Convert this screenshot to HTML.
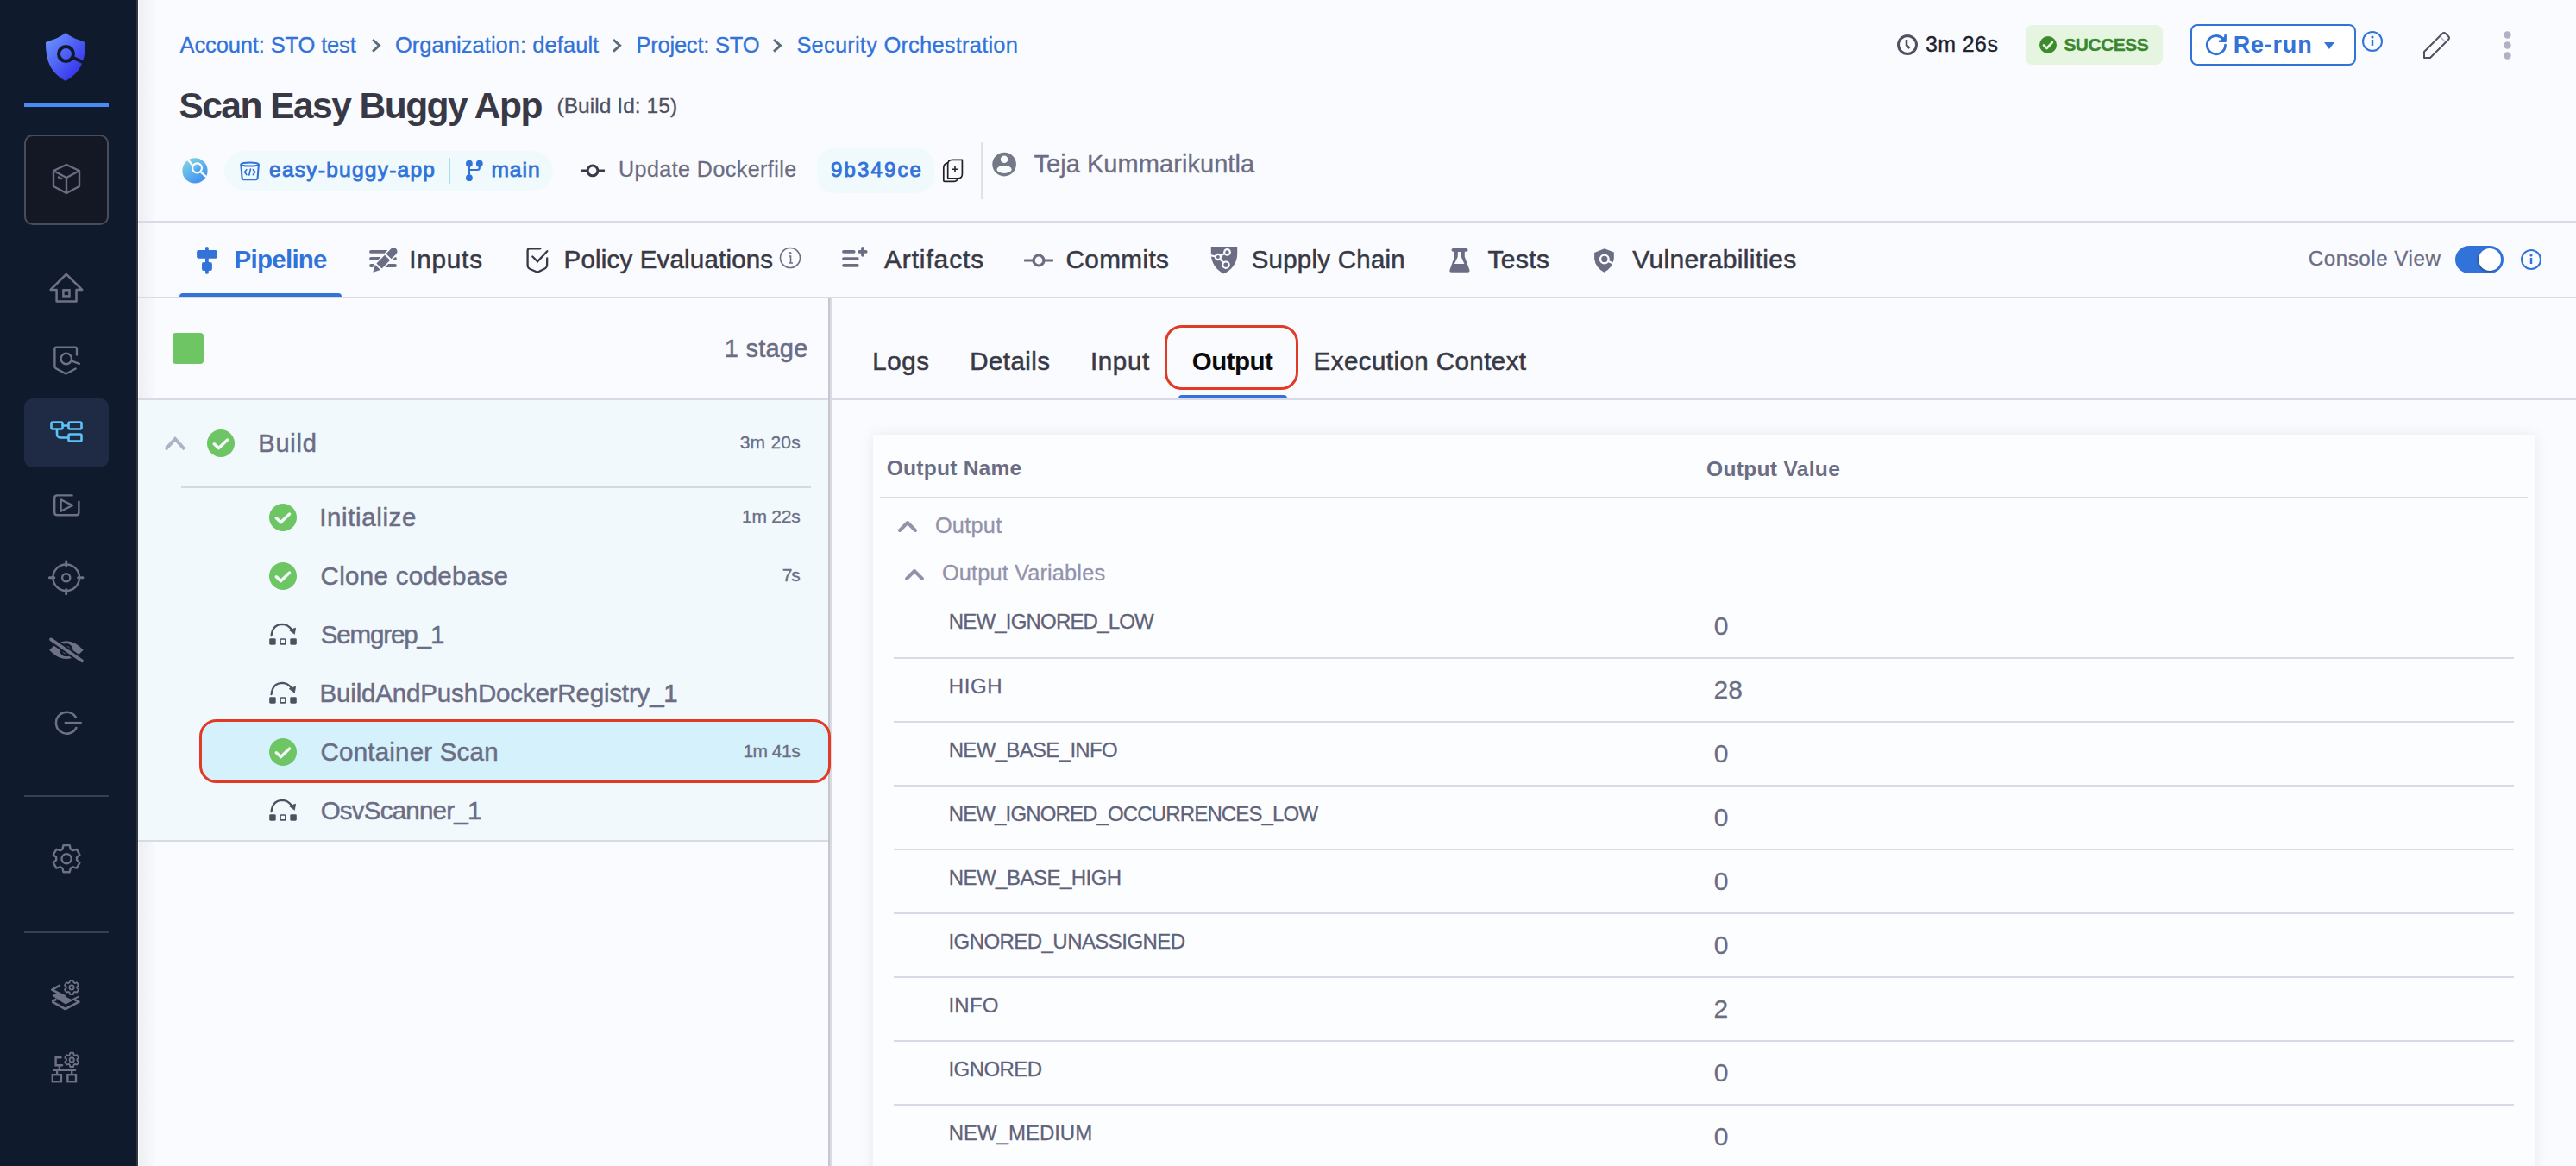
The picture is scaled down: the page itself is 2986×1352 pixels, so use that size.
<!DOCTYPE html><html><head><meta charset="utf-8"><style>
html,body{margin:0;padding:0;}
body{width:2986px;height:1352px;overflow:hidden;position:relative;background:#FAFBFE;font-family:"Liberation Sans",sans-serif;}
.t{position:absolute;white-space:nowrap;line-height:1;}
svg{display:block;}
</style></head><body>
<div style="position:absolute;left:0px;top:0px;width:158px;height:1352px;background:#0F1A2D;"></div>
<div style="position:absolute;left:158px;top:0px;width:2px;height:1352px;background:#33353F;"></div>
<div style="position:absolute;left:160px;top:0px;width:1px;height:1352px;background:#FFFFFF;"></div>
<div style="position:absolute;left:161px;top:0px;width:21px;height:1352px;background:linear-gradient(to right,#EEEFF3,rgba(250,251,254,0));"></div>
<svg style="position:absolute;left:50px;top:36px;" width="52" height="60" viewBox="0 52 60" fill="none"><defs><linearGradient id="lg" x1="0" y1="0" x2="1" y2="1"><stop offset="0" stop-color="#6F9BFF"/><stop offset="1" stop-color="#2A1FE8"/></linearGradient></defs>
<path d="M26 2 C19 8 11 10 3 13 C3 36 9 48 26 58 C43 48 49 36 49 13 C41 10 33 8 26 2 Z" fill="url(#lg)"/>
<circle cx="26.5" cy="26.5" r="8.5" stroke="#0F1A2D" stroke-width="4"/>
<path d="M33 30 L48 37" stroke="#0F1A2D" stroke-width="4"/></svg>
<div style="position:absolute;left:28px;top:120px;width:98px;height:4px;background:#4A8AF4;"></div>
<div style="position:absolute;left:28px;top:156px;width:98px;height:105px;background:#141824;border:2px solid #4A4C58;border-radius:10px;box-sizing:border-box;"></div>
<svg style="position:absolute;left:59px;top:189px;" width="36" height="38" viewBox="0 36 38" fill="none"><path d="M18 2 L33 9 L33 27 L18 35 L3 27 L3 9 Z M3 9 L18 17 L33 9 M18 17 L18 35 M8 16 L13 18.5" stroke="#6B6D85" stroke-width="2.4" stroke-linejoin="round"/></svg>
<svg style="position:absolute;left:50px;top:310px;" width="54" height="130" viewBox="0 54 130" fill="none"><path d="M8.6 26 L26.8 7.9 L45.2 26 L38.5 26 L38.5 39.6 L15.6 39.6 L15.6 26 Z" stroke="#6F7185" stroke-width="2.5" stroke-linejoin="round"/><rect x="23.4" y="26.3" width="7.1" height="7.1" stroke="#6F7185" stroke-width="2.5"/></svg>
<svg style="position:absolute;left:50px;top:310px;" width="54" height="130" viewBox="0 54 130" fill="none"><path d="M39 101.6 L39 94.6 Q39 92.6 37 92.6 L15.4 92.6 Q13.4 92.6 13.4 94.6 L13.4 115 Q13.4 116.6 15 117.4 L26.5 123.5 L37.7 117.5" stroke="#6F7185" stroke-width="2.4" stroke-linejoin="round" stroke-linecap="round"/><circle cx="26.8" cy="106" r="6.2" stroke="#6F7185" stroke-width="2.4"/><path d="M32.6 108.4 L41.9 111.8" stroke="#6F7185" stroke-width="2.4" stroke-linecap="round"/></svg>
<div style="position:absolute;left:28px;top:462px;width:98px;height:80px;background:#1F2B45;border-radius:10px;"></div>
<svg style="position:absolute;left:57px;top:487px;" width="40" height="28" viewBox="0 40 28" fill="none"><rect x="2.5" y="2.5" width="13" height="8" rx="1.5" stroke="#5CC3F5" stroke-width="2.6"/><rect x="22.5" y="2.5" width="15" height="8" rx="1.5" stroke="#5CC3F5" stroke-width="2.6"/><rect x="22.5" y="16.5" width="15" height="8" rx="1.5" stroke="#5CC3F5" stroke-width="2.6"/><path d="M15.5 6.5 L22.5 6.5 M9 10.5 L9 16 Q9 20.5 14 20.5 L22.5 20.5" stroke="#5CC3F5" stroke-width="2.6"/></svg>
<svg style="position:absolute;left:50px;top:560px;" width="54" height="140" viewBox="0 54 140" fill="none"><path d="M33.6 14.4 L16.2 14.4 Q13.2 14.4 13.2 17.4 L13.2 34.2 Q13.2 37.2 16.2 37.2 L38.4 37.2 Q41.4 37.2 41.4 34.2 L41.4 21.6" stroke="#6F7185" stroke-width="2.4" stroke-linecap="round"/><path d="M20.6 19.4 L34 26 L20.6 32.8 Z" stroke="#6F7185" stroke-width="2.4" stroke-linejoin="round"/></svg>
<svg style="position:absolute;left:50px;top:560px;" width="54" height="140" viewBox="0 54 140" fill="none"><circle cx="26.7" cy="109.8" r="15.3" stroke="#6F7185" stroke-width="2.4"/><circle cx="26.7" cy="109.8" r="4.6" stroke="#6F7185" stroke-width="2.4"/><path d="M26.7 90.8 L26.7 96.2 M26.7 123.4 L26.7 128.8 M7.4 109.8 L12.8 109.8 M40.6 109.8 L46 109.8" stroke="#6F7185" stroke-width="3" stroke-linecap="round"/></svg>
<svg style="position:absolute;left:50px;top:730px;" width="54" height="46" viewBox="0 54 46" fill="none"><path d="M7.1 23.7 Q26.8 3 46.7 23.7 Q26.8 44.5 7.1 23.7 Z" fill="#6F7185"/><circle cx="26.8" cy="23.7" r="6.2" stroke="#0F1A2D" stroke-width="2.8"/><path d="M9.1 11.4 L45 36.3" stroke="#0F1A2D" stroke-width="8"/><path d="M9.1 11.4 L45 36.3" stroke="#6F7185" stroke-width="3.8" stroke-linecap="round"/></svg>
<svg style="position:absolute;left:50px;top:815px;" width="54" height="45" viewBox="0 54 45" fill="none"><path d="M38.4 17.6 A12.4 12.4 0 1 0 38.8 28" stroke="#6F7185" stroke-width="2.5" fill="none"/><path d="M24.7 23.1 L44.8 23.1" stroke="#6F7185" stroke-width="2.4"/></svg>
<div style="position:absolute;left:28px;top:922px;width:98px;height:2px;background:#3A3E4E;"></div>
<svg style="position:absolute;left:50px;top:970px;" width="54" height="55" viewBox="0 54 55" fill="none"><path d="M22.41 14.65 L23.50 10.11 L30.70 10.11 L31.79 14.65 L34.32 16.12 L38.80 14.79 L42.40 21.02 L39.01 24.24 L39.01 27.16 L42.40 30.38 L38.80 36.61 L34.32 35.28 L31.79 36.75 L30.70 41.29 L23.50 41.29 L22.41 36.75 L19.88 35.28 L15.40 36.61 L11.80 30.38 L15.19 27.16 L15.19 24.24 L11.80 21.02 L15.40 14.79 L19.88 16.12 Z" stroke="#6F7185" stroke-width="2.4" stroke-linejoin="round"/><circle cx="27.1" cy="25.7" r="5.6" stroke="#6F7185" stroke-width="2.4"/></svg>
<div style="position:absolute;left:28px;top:1080px;width:98px;height:2px;background:#3A3E4E;"></div>
<svg style="position:absolute;left:50px;top:1130px;" width="50" height="50" viewBox="0 50 50" fill="none"><path d="M19.7 12.4 L10.3 17.6 L25.8 25.5" stroke="#6F7185" stroke-width="2.6" stroke-linejoin="round"/><path d="M10.3 24.4 L16 21 L32.5 28.8 L41.2 24.5 L41.8 26.2 L26 34.5 Z" fill="#6F7185"/><path d="M10.3 31.4 L25.7 40 L41.5 31.6 L36.5 29" stroke="#6F7185" stroke-width="2.6" stroke-linejoin="round"/><path d="M10.3 31.4 L15.5 28.5" stroke="#6F7185" stroke-width="2.6"/><path d="M30.48 9.34 L31.13 6.91 L34.87 6.91 L35.52 9.34 L36.64 9.98 L39.07 9.34 L40.94 12.57 L39.17 14.35 L39.17 15.65 L40.94 17.43 L39.07 20.66 L36.64 20.02 L35.52 20.66 L34.87 23.09 L31.13 23.09 L30.48 20.66 L29.36 20.02 L26.93 20.66 L25.06 17.43 L26.83 15.65 L26.83 14.35 L25.06 12.57 L26.93 9.34 L29.36 9.98 Z" stroke="#6F7185" stroke-width="1.9" stroke-linejoin="round"/><circle cx="33" cy="15" r="2.6" stroke="#6F7185" stroke-width="1.9"/></svg>
<svg style="position:absolute;left:50px;top:1212px;" width="50" height="50" viewBox="0 50 50" fill="none"><rect x="10.8" y="34.2" width="10.1" height="8" stroke="#6F7185" stroke-width="2.4"/><rect x="28.4" y="34.2" width="9.6" height="8" stroke="#6F7185" stroke-width="2.4"/><path d="M12 28.7 L37.1 28.7 M16.1 28.7 L16.1 33 M33.2 28.7 L33.2 33 M18.9 28.7 L18.9 23.2 M22.1 23.2 L14.6 23.2 L14.6 14.2 L20.6 14.2" stroke="#6F7185" stroke-width="2.4" stroke-linecap="round"/><path d="M30.68 11.24 L31.33 8.81 L35.07 8.81 L35.72 11.24 L36.84 11.88 L39.27 11.24 L41.14 14.47 L39.37 16.25 L39.37 17.55 L41.14 19.33 L39.27 22.56 L36.84 21.92 L35.72 22.56 L35.07 24.99 L31.33 24.99 L30.68 22.56 L29.56 21.92 L27.13 22.56 L25.26 19.33 L27.03 17.55 L27.03 16.25 L25.26 14.47 L27.13 11.24 L29.56 11.88 Z" stroke="#6F7185" stroke-width="1.9" stroke-linejoin="round"/><circle cx="33.2" cy="16.9" r="2.6" stroke="#6F7185" stroke-width="1.9"/></svg>
<div class="t" style="left:208.6px;top:39.5px;font-size:25.5px;font-weight:400;color:#3273D9;letter-spacing:-0.14px;-webkit-text-stroke:0.3px #3273D9;">Account: STO test</div>
<div class="t" style="left:457.9px;top:39.5px;font-size:25.5px;font-weight:400;color:#3273D9;letter-spacing:0.05px;-webkit-text-stroke:0.3px #3273D9;">Organization: default</div>
<div class="t" style="left:737.4px;top:39.5px;font-size:25.5px;font-weight:400;color:#3273D9;letter-spacing:-0.21px;-webkit-text-stroke:0.3px #3273D9;">Project: STO</div>
<div class="t" style="left:923.4px;top:39.5px;font-size:25.5px;font-weight:400;color:#3273D9;letter-spacing:0.20px;-webkit-text-stroke:0.3px #3273D9;">Security Orchestration</div>
<svg style="position:absolute;left:430px;top:43.5px;" width="12" height="17" viewBox="0 12 17" fill="none"><path d="M2 2 L9.6 8.8 L2 15.6" stroke="#5B6B7A" stroke-width="2.9"/></svg>
<svg style="position:absolute;left:709px;top:43.5px;" width="12" height="17" viewBox="0 12 17" fill="none"><path d="M2 2 L9.6 8.8 L2 15.6" stroke="#5B6B7A" stroke-width="2.9"/></svg>
<svg style="position:absolute;left:895px;top:43.5px;" width="12" height="17" viewBox="0 12 17" fill="none"><path d="M2 2 L9.6 8.8 L2 15.6" stroke="#5B6B7A" stroke-width="2.9"/></svg>
<div class="t" style="left:207.4px;top:102.4px;font-size:42.5px;font-weight:700;color:#383946;letter-spacing:-1.53px;">Scan Easy Buggy App</div>
<div class="t" style="left:645.5px;top:111.2px;font-size:24.5px;font-weight:400;color:#4F5162;letter-spacing:0.05px;-webkit-text-stroke:0.3px #4F5162;">(Build Id: 15)</div>
<svg style="position:absolute;left:205px;top:175px;" width="45" height="45" viewBox="0 45 45" fill="none"><defs><linearGradient id="cg" x1="0.2" y1="0.1" x2="0.8" y2="0.95"><stop offset="0" stop-color="#7AD0E4"/><stop offset="1" stop-color="#3E8EF2"/></linearGradient><clipPath id="cc"><circle cx="21" cy="22.9" r="14.6"/></clipPath></defs><circle cx="21" cy="22.9" r="14.6" fill="url(#cg)"/><g clip-path="url(#cc)"><path d="M11 8 L18 16.5 M27.8 24.6 L40 35" stroke="#FAFBFE" stroke-width="2.4"/></g><circle cx="23.5" cy="19.8" r="5.5" fill="url(#cg)" stroke="#FAFBFE" stroke-width="2.2"/></svg>
<div style="position:absolute;left:260px;top:175px;width:381px;height:46px;background:#F0FAFC;border-radius:23px;"></div>
<svg style="position:absolute;left:270px;top:180px;" width="40" height="35" viewBox="0 40 35" fill="none"><ellipse cx="19.6" cy="10.5" rx="10.3" ry="2.1" stroke="#3273D9" stroke-width="2"/><path d="M9.3 10.5 L10.6 26.5 Q10.8 28.2 13 28.2 L26.2 28.2 Q28.4 28.2 28.6 26.5 L29.9 10.5" stroke="#3273D9" stroke-width="2.1" stroke-linejoin="round"/><path d="M15.8 16.7 L13.5 19.6 L15.8 22.5 M23.4 16.7 L25.7 19.6 L23.4 22.5 M20.4 16.2 L18.8 23" stroke="#3273D9" stroke-width="1.7" stroke-linecap="round"/></svg>
<div class="t" style="left:312.0px;top:185.2px;font-size:24.5px;font-weight:400;color:#3273D9;letter-spacing:1.25px;-webkit-text-stroke:0.9px #3273D9;">easy-buggy-app</div>
<div style="position:absolute;left:520px;top:183px;width:2px;height:30px;background:#A9DDF3;"></div>
<svg style="position:absolute;left:530px;top:175px;" width="40" height="45" viewBox="0 40 45" fill="none"><circle cx="13.9" cy="14.7" r="3.9" fill="#3273D9"/><circle cx="25.8" cy="14.7" r="3.9" fill="#3273D9"/><circle cx="13.9" cy="31.2" r="3.9" fill="#3273D9"/><path d="M13.9 14.7 L13.9 31.2 M25.8 14.7 L25.8 19.5 Q25.8 22 23.3 22 L13.9 22" stroke="#3273D9" stroke-width="2.2"/></svg>
<div class="t" style="left:569.4px;top:185.2px;font-size:24.5px;font-weight:400;color:#3273D9;letter-spacing:1.05px;-webkit-text-stroke:0.9px #3273D9;">main</div>
<svg style="position:absolute;left:670px;top:185px;" width="36" height="26" viewBox="0 36 26" fill="none"><circle cx="17" cy="12.9" r="5.9" stroke="#383946" stroke-width="3"/><path d="M3 12.9 L11 12.9 M23 12.9 L31 12.9" stroke="#383946" stroke-width="3"/></svg>
<div class="t" style="left:717.1px;top:184.4px;font-size:25px;font-weight:400;color:#6B6D85;letter-spacing:0.46px;-webkit-text-stroke:0.3px #6B6D85;">Update Dockerfile</div>
<div style="position:absolute;left:947px;top:172px;width:136px;height:52px;background:#F0FAFC;border-radius:20px;"></div>
<div class="t" style="left:962.9px;top:185.3px;font-size:24px;font-weight:400;color:#3273D9;letter-spacing:2.15px;-webkit-text-stroke:0.9px #3273D9;">9b349ce</div>
<svg style="position:absolute;left:1085px;top:170px;" width="40" height="50" viewBox="0 40 50" fill="none"><path d="M13.7 18.9 Q8.8 20 8.8 24.5 L8.8 39.3 Q8.8 40.3 9.8 40.3 L20.6 40.3 Q24.2 40.3 25.3 36.9" stroke="#22222A" stroke-width="1.7" stroke-linejoin="round"/><path d="M18.9 15.4 L30.4 15.4 L30.4 31.7 Q30.4 36.9 25.3 36.9 L14.7 36.9 Q13.7 36.9 13.7 35.9 L13.7 20.6 Q13.7 15.4 18.9 15.4 Z" stroke="#22222A" stroke-width="1.7" stroke-linejoin="round"/><path d="M22 22.3 L22 30 M18 26.2 L25.9 26.2" stroke="#22222A" stroke-width="1.6"/></svg>
<div style="position:absolute;left:1137px;top:165px;width:2px;height:66px;background:#E0E1EA;"></div>
<svg style="position:absolute;left:1145px;top:172px;" width="40" height="40" viewBox="0 40 40" fill="none"><circle cx="19.1" cy="18.6" r="13.8" fill="#737987"/><circle cx="19.1" cy="12.8" r="4.3" fill="#FAFBFE"/><ellipse cx="19.1" cy="24.4" rx="8.6" ry="4.5" fill="#FAFBFE"/></svg>
<div class="t" style="left:1198.4px;top:175.8px;font-size:29px;font-weight:400;color:#6B6D85;letter-spacing:0.06px;-webkit-text-stroke:0.3px #6B6D85;">Teja Kummarikuntla</div>
<svg style="position:absolute;left:2198px;top:39px;" width="26" height="26" viewBox="0 26 26" fill="none"><circle cx="13" cy="13" r="10.5" stroke="#4F5162" stroke-width="3"/><path d="M12 7 L12 13.5 L15.5 17" stroke="#4F5162" stroke-width="2.6"/></svg>
<div class="t" style="left:2232.0px;top:38.8px;font-size:25px;font-weight:400;color:#22222A;letter-spacing:0.38px;-webkit-text-stroke:0.3px #22222A;">3m 26s</div>
<div style="position:absolute;left:2348px;top:29px;width:159px;height:46px;background:#E5F5E0;border-radius:8px;"></div>
<svg style="position:absolute;left:2363px;top:41px;" width="22" height="22" viewBox="0 22 22" fill="none"><circle cx="11" cy="11" r="10" fill="#3E8A2F"/><path d="M6 11.5 L9.5 15 L16 8" stroke="#E8F5E2" stroke-width="2.6" stroke-linecap="round" stroke-linejoin="round"/></svg>
<div class="t" style="left:2392.4px;top:41.2px;font-size:21px;font-weight:700;color:#3B872C;letter-spacing:-0.53px;-webkit-text-stroke:0.35px #3B872C;">SUCCESS</div>
<div style="position:absolute;left:2539px;top:28px;width:192px;height:48px;border:2.5px solid #3273D9;border-radius:8px;box-sizing:border-box;background:#fff;"></div>
<svg style="position:absolute;left:2545px;top:30px;" width="45" height="45" viewBox="0 45 45" fill="none"><path d="M34.5 22.2 A10.6 10.6 0 1 1 31.6 14.8" stroke="#3273D9" stroke-width="2.8" fill="none" stroke-linecap="round"/><path d="M28 17.8 L34.6 17.8 L34.6 11" fill="#3273D9" stroke="#3273D9" stroke-width="2.6" stroke-linejoin="round" stroke-linecap="round"/></svg>
<div class="t" style="left:2588.7px;top:38.8px;font-size:27px;font-weight:700;color:#3273D9;letter-spacing:0.79px;">Re-run</div>
<svg style="position:absolute;left:2693px;top:48px;" width="14" height="10" viewBox="0 14 10" fill="none"><path d="M1 1 L13 1 L7 9 Z" fill="#3273D9"/></svg>
<svg style="position:absolute;left:2737px;top:35px;" width="26" height="26" viewBox="0 26 26" fill="none"><circle cx="13" cy="13" r="11" stroke="#3273D9" stroke-width="2"/><circle cx="13" cy="8" r="1.6" fill="#3273D9"/><path d="M13 11 L13 18" stroke="#3273D9" stroke-width="2.4"/></svg>
<svg style="position:absolute;left:2807px;top:35px;" width="36" height="34" viewBox="0 36 34" fill="none"><path d="M3 25 L24 4 Q26 2 28 4 L31 7 Q33 9 31 11 L10 32 L3 32 Z" stroke="#4F5162" stroke-width="2" stroke-linejoin="round"/><path d="M22 8 L27 13" stroke="#B0B1C4" stroke-width="1.4"/></svg>
<svg style="position:absolute;left:2902px;top:36px;" width="9" height="9" viewBox="0 9 9" fill="none"><circle cx="4.5" cy="4.5" r="4.2" fill="#B0B1C4"/></svg>
<svg style="position:absolute;left:2902px;top:48px;" width="9" height="9" viewBox="0 9 9" fill="none"><circle cx="4.5" cy="4.5" r="4.2" fill="#B0B1C4"/></svg>
<svg style="position:absolute;left:2902px;top:60px;" width="9" height="9" viewBox="0 9 9" fill="none"><circle cx="4.5" cy="4.5" r="4.2" fill="#B0B1C4"/></svg>
<div style="position:absolute;left:160px;top:256px;width:2826px;height:2px;background:#D9DAE5;"></div>
<div style="position:absolute;left:160px;top:344px;width:2826px;height:2px;background:#D9DAE5;"></div>
<div style="position:absolute;left:208px;top:340px;width:188px;height:4px;background:#3273D9;border-radius:4px 4px 0 0;"></div>
<svg style="position:absolute;left:220px;top:280px;" width="40" height="42" viewBox="0 40 42" fill="none"><rect x="8.1" y="10.1" width="23.8" height="9.7" rx="2.2" fill="#3273D9"/><rect x="14" y="24" width="11.9" height="9.9" rx="2.2" fill="#3273D9"/><path d="M19.9 7.8 L19.9 35.9" stroke="#3273D9" stroke-width="3.8" stroke-linecap="round"/></svg>
<div class="t" style="left:271.6px;top:286.2px;font-size:29.5px;font-weight:700;color:#3273D9;letter-spacing:-0.74px;">Pipeline</div>
<svg style="position:absolute;left:420px;top:280px;" width="50" height="42" viewBox="0 50 42" fill="none"><path d="M10 11.9 L28 11.9 M10 19.9 L22 19.9 M10 28 L16 28 M26 28 L38 28 M34 19.9 L38 19.9" stroke="#6B6D85" stroke-width="3.8" stroke-linecap="round"/><g transform="translate(12.3,35.7) rotate(-45.3)"><g fill="#FAFBFE" stroke="#FAFBFE" stroke-width="3.2" stroke-linejoin="round"><path d="M0 0 L8 -4.3 L8 4.3 Z"/><rect x="10.2" y="-4.3" width="13.6" height="8.6"/><path d="M26 -4.3 L34 -4.3 A4.3 4.3 0 0 1 34 4.3 L26 4.3 Z"/></g><g fill="#6B6D85"><path d="M0 0 L8 -4.3 L8 4.3 Z"/><rect x="10.2" y="-4.3" width="13.6" height="8.6"/><path d="M26 -4.3 L34 -4.3 A4.3 4.3 0 0 1 34 4.3 L26 4.3 Z"/></g></g></svg>
<div class="t" style="left:474.3px;top:285.8px;font-size:29.7px;font-weight:400;color:#383946;letter-spacing:0.76px;-webkit-text-stroke:0.55px #383946;">Inputs</div>
<svg style="position:absolute;left:600px;top:280px;" width="40" height="42" viewBox="0 40 42" fill="none"><path d="M26.3 8.3 L13.8 8.3 Q11.6 8.3 11.6 10.5 L11.6 28.5 Q11.8 30.5 14 31.8 L23 35.8 L32 31.2 Q33.9 30.2 34.1 28 L34.2 19.5" stroke="#383946" stroke-width="2.3" stroke-linecap="round" stroke-linejoin="round"/><path d="M17.3 17.5 L23.1 23.3 L34.3 11.2" stroke="#383946" stroke-width="2.3" stroke-linecap="round"/></svg>
<div class="t" style="left:653.6px;top:285.9px;font-size:29.5px;font-weight:400;color:#383946;letter-spacing:0.18px;-webkit-text-stroke:0.55px #383946;">Policy Evaluations</div>
<svg style="position:absolute;left:903px;top:286px;" width="26" height="26" viewBox="0 26 26" fill="none"><circle cx="13" cy="13" r="11.5" stroke="#6B6D85" stroke-width="1.6"/><circle cx="13" cy="7.5" r="1.5" fill="#6B6D85"/><path d="M11 11 L13.5 11 L13.5 19 M11 19 L16 19" stroke="#6B6D85" stroke-width="1.6"/></svg>
<svg style="position:absolute;left:968px;top:280px;" width="42" height="42" viewBox="0 42 42" fill="none"><path d="M9.9 11.9 L21.8 11.9 M9.9 20 L25.9 20 M9.9 27.9 L25.9 27.9 M28.1 11.9 L35.8 11.9 M31.9 7.9 L31.9 15.9" stroke="#6B6D85" stroke-width="3.6" stroke-linecap="round"/></svg>
<div class="t" style="left:1025.0px;top:285.7px;font-size:29.8px;font-weight:400;color:#383946;letter-spacing:0.93px;-webkit-text-stroke:0.55px #383946;">Artifacts</div>
<svg style="position:absolute;left:1187px;top:292px;" width="34" height="20" viewBox="0 34 20" fill="none"><circle cx="17" cy="10" r="6" stroke="#6B6D85" stroke-width="3.2"/><path d="M1 10 L11 10 M23 10 L33 10" stroke="#6B6D85" stroke-width="3.2" stroke-linecap="round"/></svg>
<div class="t" style="left:1235.5px;top:285.8px;font-size:29.7px;font-weight:400;color:#383946;letter-spacing:0.39px;-webkit-text-stroke:0.55px #383946;">Commits</div>
<svg style="position:absolute;left:1398px;top:280px;" width="42" height="42" viewBox="0 42 42" fill="none"><path d="M5.8 6.1 L36.2 6.1 L36.2 15 Q35.5 30 20.5 37.5 Q6.5 30 5.8 15 Z" fill="#6B6D85"/><path d="M5 16.2 L13.9 18 L24.5 12.4 M13.9 18 L23 27.2" stroke="#FAFBFE" stroke-width="2.2"/><circle cx="24.5" cy="12.4" r="3.3" fill="#6B6D85" stroke="#FAFBFE" stroke-width="2.2"/><circle cx="13.9" cy="18" r="3.1" fill="#6B6D85" stroke="#FAFBFE" stroke-width="2.2"/><circle cx="23" cy="27.2" r="3.7" fill="#6B6D85" stroke="#FAFBFE" stroke-width="2.2"/></svg>
<div class="t" style="left:1450.7px;top:286.0px;font-size:29.4px;font-weight:400;color:#383946;letter-spacing:0.29px;-webkit-text-stroke:0.55px #383946;">Supply Chain</div>
<svg style="position:absolute;left:1672px;top:280px;" width="40" height="42" viewBox="0 40 42" fill="none"><path d="M14 10 L25.8 10 L25.8 17.8 L31.4 33 Q32 35.7 29.3 35.7 L10.5 35.7 Q7.8 35.7 8.5 33 L14 17.8 Z" fill="#6B6D85"/><path d="M12.3 9.9 L27.7 9.9" stroke="#6B6D85" stroke-width="3.6" stroke-linecap="round"/><path d="M17.9 11.9 L22 11.9 L22 18.2 L25.4 26 L13.9 26 L17.7 18 Z" fill="#FAFBFE"/></svg>
<div class="t" style="left:1724.4px;top:285.5px;font-size:30px;font-weight:400;color:#383946;letter-spacing:0.40px;-webkit-text-stroke:0.55px #383946;">Tests</div>
<svg style="position:absolute;left:1840px;top:280px;" width="40" height="42" viewBox="0 40 42" fill="none"><path d="M19.8 8.3 L30.8 12.4 L30.8 20 Q29.5 30.5 19.5 35.7 Q9.3 30.5 8.1 20 L8.1 13 Z" fill="#6B6D85"/><circle cx="19.8" cy="20.4" r="4.8" stroke="#FAFBFE" stroke-width="2.4"/><path d="M24.3 23 L31 26" stroke="#FAFBFE" stroke-width="2.4"/></svg>
<div class="t" style="left:1892.3px;top:285.5px;font-size:30px;font-weight:400;color:#383946;letter-spacing:0.31px;-webkit-text-stroke:0.55px #383946;">Vulnerabilities</div>
<div class="t" style="left:2675.8px;top:288.4px;font-size:24.2px;font-weight:400;color:#6B6D85;letter-spacing:0.51px;-webkit-text-stroke:0.3px #6B6D85;">Console View</div>
<div style="position:absolute;left:2846px;top:285px;width:56px;height:32px;background:#3273D9;border-radius:16px;"></div>
<div style="position:absolute;left:2873px;top:287.5px;width:26px;height:26px;border-radius:50%;background:#fff;box-shadow:-1px 1px 2px rgba(0,0,0,.35);"></div>
<svg style="position:absolute;left:2921px;top:288px;" width="26" height="26" viewBox="0 26 26" fill="none"><circle cx="13" cy="13" r="11" stroke="#3273D9" stroke-width="2"/><circle cx="13" cy="8" r="1.6" fill="#3273D9"/><path d="M13 11 L13 18" stroke="#3273D9" stroke-width="2.4"/></svg>
<div style="position:absolute;left:160px;top:464px;width:800px;height:511px;background:#F2F9FC;"></div>
<div style="position:absolute;left:160px;top:462px;width:800px;height:2px;background:#D9DAE5;"></div>
<div style="position:absolute;left:160px;top:974px;width:800px;height:2px;background:#D9DAE5;"></div>
<div style="position:absolute;left:960px;top:346px;width:2px;height:1006px;background:#C6C6CD;"></div>
<div style="position:absolute;left:962px;top:346px;width:2px;height:1006px;background:#D9DAE4;"></div>
<div style="position:absolute;left:200px;top:386px;width:36px;height:36px;background:#6DC563;border-radius:4px;"></div>
<div class="t" style="left:839.8px;top:390.0px;font-size:29px;font-weight:400;color:#6B6D85;letter-spacing:0.23px;-webkit-text-stroke:0.5px #6B6D85;">1 stage</div>
<svg style="position:absolute;left:189px;top:504px;" width="28" height="20" viewBox="0 28 20" fill="none"><path d="M3 17 L14 5 L25 17" stroke="#B0B1C4" stroke-width="4"/></svg>
<svg style="position:absolute;left:240px;top:498px;" width="32" height="32" viewBox="0 32 32" fill="none"><circle cx="16" cy="16" r="16" fill="#6DC563"/><path d="M8.3 16.8 L13.6 21.6 L23.6 12" stroke="#F4FAFC" stroke-width="3.5" stroke-linecap="round" stroke-linejoin="round"/></svg>
<div class="t" style="left:299.3px;top:499.6px;font-size:29px;font-weight:400;color:#6B6D85;letter-spacing:0.77px;-webkit-text-stroke:0.5px #6B6D85;">Build</div>
<div class="t" style="left:857.7px;top:502.1px;font-size:21px;font-weight:400;color:#6B6D85;letter-spacing:0.24px;-webkit-text-stroke:0.3px #6B6D85;">3m 20s</div>
<div style="position:absolute;left:210px;top:564px;width:730px;height:2px;background:#D3DAE0;"></div>
<div style="position:absolute;left:231px;top:834px;width:732px;height:74px;box-sizing:border-box;border:3.5px solid #E23B25;border-radius:20px;background:#D5F2FC;"></div>
<svg style="position:absolute;left:312px;top:584px;" width="32" height="32" viewBox="0 32 32" fill="none"><circle cx="16" cy="16" r="16" fill="#6DC563"/><path d="M8.3 16.8 L13.6 21.6 L23.6 12" stroke="#F4FAFC" stroke-width="3.5" stroke-linecap="round" stroke-linejoin="round"/></svg>
<div class="t" style="left:370.3px;top:585.2px;font-size:29.5px;font-weight:400;color:#6B6D85;letter-spacing:0.61px;-webkit-text-stroke:0.5px #6B6D85;">Initialize</div>
<div class="t" style="right:2058.5px;top:587.9px;font-size:21px;font-weight:400;color:#6B6D85;letter-spacing:-0.23px;-webkit-text-stroke:0.3px #6B6D85;">1m 22s</div>
<svg style="position:absolute;left:312px;top:652px;" width="32" height="32" viewBox="0 32 32" fill="none"><circle cx="16" cy="16" r="16" fill="#6DC563"/><path d="M8.3 16.8 L13.6 21.6 L23.6 12" stroke="#F4FAFC" stroke-width="3.5" stroke-linecap="round" stroke-linejoin="round"/></svg>
<div class="t" style="left:371.5px;top:653.2px;font-size:29.5px;font-weight:400;color:#6B6D85;letter-spacing:0.33px;-webkit-text-stroke:0.5px #6B6D85;">Clone codebase</div>
<div class="t" style="right:2059.3px;top:655.9px;font-size:21px;font-weight:400;color:#6B6D85;letter-spacing:-1.07px;-webkit-text-stroke:0.3px #6B6D85;">7s</div>
<svg style="position:absolute;left:305px;top:715px;" width="45" height="40" viewBox="0 45 40" fill="none"><path d="M9.6 22 Q11 9 22.6 8.9 Q28.5 9 33.5 15.5" stroke="#4F5162" stroke-width="2.3" fill="none" stroke-linecap="round"/><path d="M30.2 15.6 L37.6 13.3 L36.4 20.3 Z" fill="#4F5162" stroke="#4F5162" stroke-width="0.8" stroke-linejoin="round"/><rect x="7.2" y="25.2" width="7.5" height="7.5" rx="1.4" fill="#4F5162"/><rect x="20" y="26" width="5.9" height="5.9" rx="1" stroke="#4F5162" stroke-width="1.7"/><rect x="31.3" y="25.2" width="7.5" height="7.5" rx="1.4" fill="#4F5162"/></svg>
<div class="t" style="left:371.7px;top:721.2px;font-size:29.5px;font-weight:400;color:#6B6D85;letter-spacing:-1.11px;-webkit-text-stroke:0.5px #6B6D85;">Semgrep_1</div>
<svg style="position:absolute;left:305px;top:783px;" width="45" height="40" viewBox="0 45 40" fill="none"><path d="M9.6 22 Q11 9 22.6 8.9 Q28.5 9 33.5 15.5" stroke="#4F5162" stroke-width="2.3" fill="none" stroke-linecap="round"/><path d="M30.2 15.6 L37.6 13.3 L36.4 20.3 Z" fill="#4F5162" stroke="#4F5162" stroke-width="0.8" stroke-linejoin="round"/><rect x="7.2" y="25.2" width="7.5" height="7.5" rx="1.4" fill="#4F5162"/><rect x="20" y="26" width="5.9" height="5.9" rx="1" stroke="#4F5162" stroke-width="1.7"/><rect x="31.3" y="25.2" width="7.5" height="7.5" rx="1.4" fill="#4F5162"/></svg>
<div class="t" style="left:370.6px;top:789.2px;font-size:29.5px;font-weight:400;color:#6B6D85;letter-spacing:-0.17px;-webkit-text-stroke:0.5px #6B6D85;">BuildAndPushDockerRegistry_1</div>
<svg style="position:absolute;left:312px;top:856px;" width="32" height="32" viewBox="0 32 32" fill="none"><circle cx="16" cy="16" r="16" fill="#6DC563"/><path d="M8.3 16.8 L13.6 21.6 L23.6 12" stroke="#F4FAFC" stroke-width="3.5" stroke-linecap="round" stroke-linejoin="round"/></svg>
<div class="t" style="left:371.5px;top:857.2px;font-size:29.5px;font-weight:400;color:#6B6D85;letter-spacing:0.21px;-webkit-text-stroke:0.5px #6B6D85;">Container Scan</div>
<div class="t" style="right:2058.8px;top:859.9px;font-size:21px;font-weight:400;color:#6B6D85;letter-spacing:-0.51px;-webkit-text-stroke:0.3px #6B6D85;">1m 41s</div>
<svg style="position:absolute;left:305px;top:919px;" width="45" height="40" viewBox="0 45 40" fill="none"><path d="M9.6 22 Q11 9 22.6 8.9 Q28.5 9 33.5 15.5" stroke="#4F5162" stroke-width="2.3" fill="none" stroke-linecap="round"/><path d="M30.2 15.6 L37.6 13.3 L36.4 20.3 Z" fill="#4F5162" stroke="#4F5162" stroke-width="0.8" stroke-linejoin="round"/><rect x="7.2" y="25.2" width="7.5" height="7.5" rx="1.4" fill="#4F5162"/><rect x="20" y="26" width="5.9" height="5.9" rx="1" stroke="#4F5162" stroke-width="1.7"/><rect x="31.3" y="25.2" width="7.5" height="7.5" rx="1.4" fill="#4F5162"/></svg>
<div class="t" style="left:371.7px;top:925.2px;font-size:29.5px;font-weight:400;color:#6B6D85;letter-spacing:-0.77px;-webkit-text-stroke:0.5px #6B6D85;">OsvScanner_1</div>
<div style="position:absolute;left:964px;top:462px;width:2022px;height:2px;background:#D9DAE5;"></div>
<div class="t" style="left:1011.2px;top:404.1px;font-size:29.5px;font-weight:400;color:#383946;letter-spacing:0.59px;-webkit-text-stroke:0.55px #383946;">Logs</div>
<div class="t" style="left:1124.2px;top:404.1px;font-size:29.5px;font-weight:400;color:#383946;letter-spacing:0.45px;-webkit-text-stroke:0.55px #383946;">Details</div>
<div class="t" style="left:1263.9px;top:404.1px;font-size:29.5px;font-weight:400;color:#383946;letter-spacing:0.68px;-webkit-text-stroke:0.55px #383946;">Input</div>
<div class="t" style="left:1381.8px;top:404.1px;font-size:29.5px;font-weight:700;color:#0B0B0D;letter-spacing:-0.55px;">Output</div>
<div class="t" style="left:1522.6px;top:404.1px;font-size:29.5px;font-weight:400;color:#383946;letter-spacing:0.44px;-webkit-text-stroke:0.55px #383946;">Execution Context</div>
<div style="position:absolute;left:1350px;top:377px;width:155px;height:75px;box-sizing:border-box;border:3.5px solid #E23B25;border-radius:20px;"></div>
<div style="position:absolute;left:1366px;top:458px;width:126px;height:4px;background:#3273D9;border-radius:4px 4px 0 0;"></div>
<div style="position:absolute;left:1012px;top:504px;width:1926px;height:900px;background:#FCFDFF;box-shadow:0 1px 14px rgba(96,97,112,0.13);"></div>
<div class="t" style="left:1027.7px;top:531.1px;font-size:24.6px;font-weight:700;color:#6B6D85;letter-spacing:0.22px;">Output Name</div>
<div class="t" style="left:1978.0px;top:531.9px;font-size:24.6px;font-weight:700;color:#6B6D85;letter-spacing:0.29px;">Output Value</div>
<div style="position:absolute;left:1020px;top:576px;width:1910px;height:2px;background:#D9DAE5;"></div>
<svg style="position:absolute;left:1040px;top:602px;" width="24" height="16" viewBox="0 24 16" fill="none"><path d="M3 13 L12 4 L21 13" stroke="#9293AB" stroke-width="4" stroke-linecap="round" stroke-linejoin="round"/></svg>
<div class="t" style="left:1083.9px;top:596.5px;font-size:25.3px;font-weight:400;color:#9293AB;letter-spacing:0.27px;-webkit-text-stroke:0.3px #9293AB;">Output</div>
<svg style="position:absolute;left:1048px;top:658px;" width="24" height="16" viewBox="0 24 16" fill="none"><path d="M3 13 L12 4 L21 13" stroke="#9293AB" stroke-width="4" stroke-linecap="round" stroke-linejoin="round"/></svg>
<div class="t" style="left:1091.9px;top:651.8px;font-size:25.4px;font-weight:400;color:#9293AB;letter-spacing:0.13px;-webkit-text-stroke:0.3px #9293AB;">Output Variables</div>
<div class="t" style="left:1099.7px;top:709.4px;font-size:24px;font-weight:400;color:#5F6279;letter-spacing:-0.81px;-webkit-text-stroke:0.3px #5F6279;">NEW_IGNORED_LOW</div>
<div class="t" style="left:1986.8px;top:710.5px;font-size:30px;font-weight:400;color:#6B6D85;letter-spacing:0.00px;-webkit-text-stroke:0.3px #6B6D85;">0</div>
<div style="position:absolute;left:1036px;top:762px;width:1878px;height:2px;background:#D9DAE5;"></div>
<div class="t" style="left:1099.7px;top:783.5px;font-size:24px;font-weight:400;color:#5F6279;letter-spacing:0.61px;-webkit-text-stroke:0.3px #5F6279;">HIGH</div>
<div class="t" style="left:1986.5px;top:784.6px;font-size:30px;font-weight:400;color:#6B6D85;letter-spacing:0.00px;-webkit-text-stroke:0.3px #6B6D85;">28</div>
<div style="position:absolute;left:1036px;top:836px;width:1878px;height:2px;background:#D9DAE5;"></div>
<div class="t" style="left:1099.7px;top:857.6px;font-size:24px;font-weight:400;color:#5F6279;letter-spacing:-0.67px;-webkit-text-stroke:0.3px #5F6279;">NEW_BASE_INFO</div>
<div class="t" style="left:1986.8px;top:858.7px;font-size:30px;font-weight:400;color:#6B6D85;letter-spacing:0.00px;-webkit-text-stroke:0.3px #6B6D85;">0</div>
<div style="position:absolute;left:1036px;top:910px;width:1878px;height:2px;background:#D9DAE5;"></div>
<div class="t" style="left:1099.7px;top:931.7px;font-size:24px;font-weight:400;color:#5F6279;letter-spacing:-0.86px;-webkit-text-stroke:0.3px #5F6279;">NEW_IGNORED_OCCURRENCES_LOW</div>
<div class="t" style="left:1986.8px;top:932.8px;font-size:30px;font-weight:400;color:#6B6D85;letter-spacing:0.00px;-webkit-text-stroke:0.3px #6B6D85;">0</div>
<div style="position:absolute;left:1036px;top:984px;width:1878px;height:2px;background:#D9DAE5;"></div>
<div class="t" style="left:1099.7px;top:1005.8px;font-size:24px;font-weight:400;color:#5F6279;letter-spacing:-0.52px;-webkit-text-stroke:0.3px #5F6279;">NEW_BASE_HIGH</div>
<div class="t" style="left:1986.8px;top:1006.9px;font-size:30px;font-weight:400;color:#6B6D85;letter-spacing:0.00px;-webkit-text-stroke:0.3px #6B6D85;">0</div>
<div style="position:absolute;left:1036px;top:1058px;width:1878px;height:2px;background:#D9DAE5;"></div>
<div class="t" style="left:1099.4px;top:1079.9px;font-size:24px;font-weight:400;color:#5F6279;letter-spacing:-0.55px;-webkit-text-stroke:0.3px #5F6279;">IGNORED_UNASSIGNED</div>
<div class="t" style="left:1986.8px;top:1081.0px;font-size:30px;font-weight:400;color:#6B6D85;letter-spacing:0.00px;-webkit-text-stroke:0.3px #6B6D85;">0</div>
<div style="position:absolute;left:1036px;top:1132px;width:1878px;height:2px;background:#D9DAE5;"></div>
<div class="t" style="left:1099.4px;top:1154.0px;font-size:24px;font-weight:400;color:#5F6279;letter-spacing:0.27px;-webkit-text-stroke:0.3px #5F6279;">INFO</div>
<div class="t" style="left:1986.5px;top:1155.1px;font-size:30px;font-weight:400;color:#6B6D85;letter-spacing:0.00px;-webkit-text-stroke:0.3px #6B6D85;">2</div>
<div style="position:absolute;left:1036px;top:1206px;width:1878px;height:2px;background:#D9DAE5;"></div>
<div class="t" style="left:1099.4px;top:1228.1px;font-size:24px;font-weight:400;color:#5F6279;letter-spacing:-0.54px;-webkit-text-stroke:0.3px #5F6279;">IGNORED</div>
<div class="t" style="left:1986.8px;top:1229.2px;font-size:30px;font-weight:400;color:#6B6D85;letter-spacing:0.00px;-webkit-text-stroke:0.3px #6B6D85;">0</div>
<div style="position:absolute;left:1036px;top:1280px;width:1878px;height:2px;background:#D9DAE5;"></div>
<div class="t" style="left:1099.7px;top:1302.2px;font-size:24px;font-weight:400;color:#5F6279;letter-spacing:-0.02px;-webkit-text-stroke:0.3px #5F6279;">NEW_MEDIUM</div>
<div class="t" style="left:1986.8px;top:1303.3px;font-size:30px;font-weight:400;color:#6B6D85;letter-spacing:0.00px;-webkit-text-stroke:0.3px #6B6D85;">0</div>
</body></html>
